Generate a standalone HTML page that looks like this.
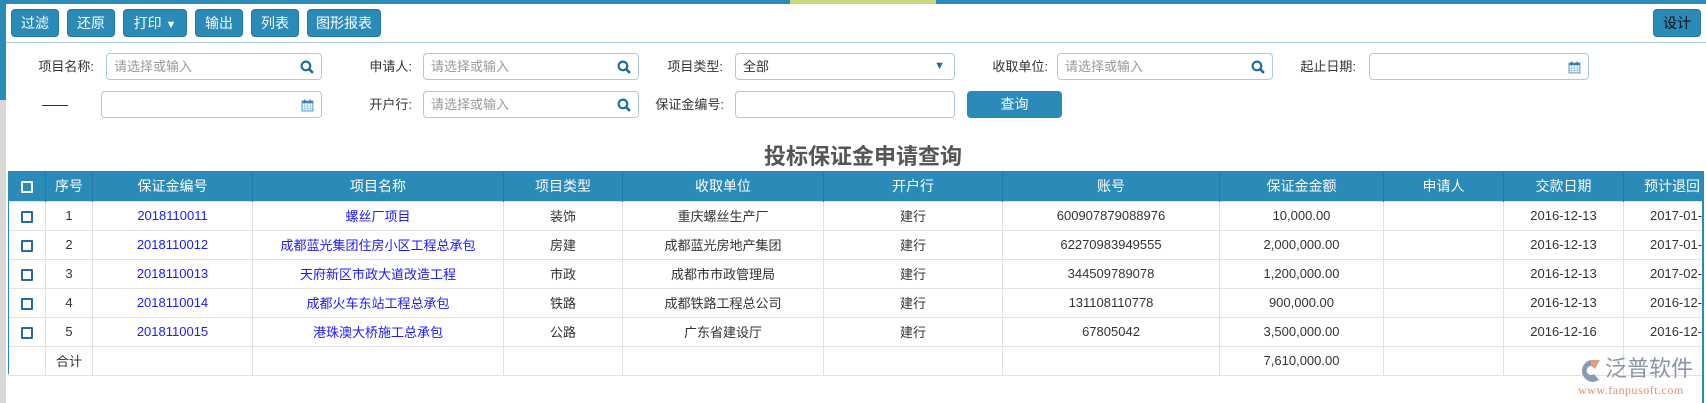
<!DOCTYPE html>
<html><head><meta charset="utf-8"><style>
*{box-sizing:border-box;margin:0;padding:0}
body{width:1706px;height:403px;background:#fff;position:relative;overflow:hidden;font-family:"Liberation Sans","Noto Sans CJK SC",sans-serif;font-size:13px;color:#333}
.a{position:absolute}
.btn{position:absolute;top:9px;height:28px;background:#2a8ab8;border:1px solid #2379a3;border-radius:4px;color:#fff;font-size:14px;line-height:26px;text-align:center}
.lbl{position:absolute;font-size:13px;color:#333;text-align:right;line-height:27px}
.inp{position:absolute;height:27px;border:1px solid #a8cbe3;border-radius:4px;background:#fff;color:#999;font-size:13px;line-height:25px;padding-left:7px}
.srch{position:absolute;right:7px;top:6px;width:14px;height:14px}
table{position:absolute;left:8px;top:171px;width:1695px;border-collapse:collapse;table-layout:fixed}
th{background:#2a8ab8;color:#fff;font-weight:normal;height:30px;font-size:14px;border-right:1px solid #2379a3;white-space:nowrap;overflow:hidden}
td{height:29px;border:1px solid #e2e2e2;text-align:center;font-size:13px;white-space:nowrap;overflow:hidden}
td.l{color:#1a1aff}
.cb{display:inline-block;width:12px;height:12px;border:2px solid #2a6a9a;border-radius:1px;vertical-align:middle}
th .cb{border-color:#fff}
</style></head><body>
<div class="a" style="left:0;top:0;width:1706px;height:4px;background:#2a8ab8"></div>
<div class="a" style="left:790px;top:0;width:146px;height:4px;background:#c8d87a"></div>
<div class="a" style="left:0;top:0;width:6px;height:100px;background:#2a8ab8"></div>
<div class="a" style="left:0;top:100px;width:6px;height:303px;background:#d8d8d8"></div>
<div class="btn" style="left:11px;width:48px">过滤</div>
<div class="btn" style="left:67px;width:48px">还原</div>
<div class="btn" style="left:123px;width:64px">打印 <span style="font-size:11px">▼</span></div>
<div class="btn" style="left:195px;width:48px">输出</div>
<div class="btn" style="left:251px;width:48px">列表</div>
<div class="btn" style="left:307px;width:74px">图形报表</div>
<div class="btn" style="left:1653px;width:48px;color:#111">设计</div>
<div class="a" style="left:6px;top:42px;width:1700px;height:1px;background:#a8cbe3"></div>

<svg width="0" height="0" style="position:absolute"><defs><symbol id="q" viewBox="0 0 13 13"><circle cx="5.5" cy="5.5" r="4" fill="none" stroke="#1a6fa0" stroke-width="2"/><path d="M8.5 8.5L12 12" stroke="#1a6fa0" stroke-width="2.4"/></symbol>
<symbol id="c" viewBox="0 0 12 12"><rect x="1" y="2" width="10" height="9" fill="#fff" stroke="#5a9ccc"/><rect x="1" y="2" width="10" height="2" fill="#3a85c0"/><path d="M1 6.5h10M1 8.7h10M3.5 4v7M6 4v7M8.5 4v7" stroke="#8ab8dc" stroke-width=".6"/><path d="M3.5 0.5v3M8.5 0.5v3" stroke="#2a6a9a"/></symbol></defs></svg>

<div class="lbl" style="left:20px;top:53px;width:74px">项目名称:</div>
<div class="inp" style="left:106px;top:53px;width:216px">请选择或输入<svg class="srch"><use href="#q"/></svg></div>
<div class="lbl" style="left:340px;top:53px;width:72px">申请人:</div>
<div class="inp" style="left:423px;top:53px;width:216px">请选择或输入<svg class="srch"><use href="#q"/></svg></div>
<div class="lbl" style="left:645px;top:53px;width:78px">项目类型:</div>
<div class="inp" style="left:735px;top:53px;width:220px;color:#333">全部<span class="a" style="right:9px;top:0;font-size:11px;color:#1a6fa0">▼</span></div>
<div class="lbl" style="left:970px;top:53px;width:78px">收取单位:</div>
<div class="inp" style="left:1057px;top:53px;width:216px">请选择或输入<svg class="srch"><use href="#q"/></svg></div>
<div class="lbl" style="left:1280px;top:53px;width:76px">起止日期:</div>
<div class="inp" style="left:1369px;top:53px;width:220px"><svg class="srch" style="width:13px;height:13px;top:7px"><use href="#c"/></svg></div>

<div class="a" style="left:42px;top:105px;width:26px;height:1px;background:#333"></div>
<div class="inp" style="left:101px;top:91px;width:221px"><svg class="srch" style="width:13px;height:13px;top:7px"><use href="#c"/></svg></div>
<div class="lbl" style="left:340px;top:91px;width:72px">开户行:</div>
<div class="inp" style="left:423px;top:91px;width:216px">请选择或输入<svg class="srch"><use href="#q"/></svg></div>
<div class="lbl" style="left:640px;top:91px;width:84px">保证金编号:</div>
<div class="inp" style="left:735px;top:91px;width:220px"></div>
<div class="a" style="left:967px;top:91px;width:95px;height:27px;background:#2a8ab8;border-radius:4px;color:#fff;font-size:14px;line-height:27px;text-align:center">查询</div>

<div class="a" style="left:663px;top:139px;width:400px;text-align:center;font-size:22px;font-weight:bold;color:#555">投标保证金申请查询</div>

<table>
<colgroup><col style="width:37px"><col style="width:47px"><col style="width:160px"><col style="width:251px"><col style="width:119px"><col style="width:201px"><col style="width:179px"><col style="width:217px"><col style="width:164px"><col style="width:120px"><col style="width:120px"><col style="width:80px"></colgroup>
<tr><th><span class="cb"></span></th><th>序号</th><th>保证金编号</th><th>项目名称</th><th>项目类型</th><th>收取单位</th><th>开户行</th><th>账号</th><th>保证金金额</th><th>申请人</th><th>交款日期</th><th style="text-align:left;padding-left:20px">预计退回日期</th></tr>
<tr><td><span class="cb"></span></td><td>1</td><td class="l">2018110011</td><td class="l">螺丝厂项目</td><td>装饰</td><td>重庆螺丝生产厂</td><td>建行</td><td>600907879088976</td><td>10,000.00</td><td></td><td>2016-12-13</td><td style="text-align:left;padding-left:26px">2017-01-20</td></tr>
<tr><td><span class="cb"></span></td><td>2</td><td class="l">2018110012</td><td class="l">成都蓝光集团住房小区工程总承包</td><td>房建</td><td>成都蓝光房地产集团</td><td>建行</td><td>62270983949555</td><td>2,000,000.00</td><td></td><td>2016-12-13</td><td style="text-align:left;padding-left:26px">2017-01-20</td></tr>
<tr><td><span class="cb"></span></td><td>3</td><td class="l">2018110013</td><td class="l">天府新区市政大道改造工程</td><td>市政</td><td>成都市市政管理局</td><td>建行</td><td>344509789078</td><td>1,200,000.00</td><td></td><td>2016-12-13</td><td style="text-align:left;padding-left:26px">2017-02-20</td></tr>
<tr><td><span class="cb"></span></td><td>4</td><td class="l">2018110014</td><td class="l">成都火车东站工程总承包</td><td>铁路</td><td>成都铁路工程总公司</td><td>建行</td><td>131108110778</td><td>900,000.00</td><td></td><td>2016-12-13</td><td style="text-align:left;padding-left:26px">2016-12-20</td></tr>
<tr><td><span class="cb"></span></td><td>5</td><td class="l">2018110015</td><td class="l">港珠澳大桥施工总承包</td><td>公路</td><td>广东省建设厅</td><td>建行</td><td>67805042</td><td>3,500,000.00</td><td></td><td>2016-12-16</td><td style="text-align:left;padding-left:26px">2016-12-20</td></tr>
<tr><td></td><td>合计</td><td></td><td></td><td></td><td></td><td></td><td></td><td>7,610,000.00</td><td></td><td></td><td style="border-right:none"></td></tr>
</table>
<div class="a" style="left:8px;top:171px;width:1px;height:203px;background:#2a8ab8"></div>
<div class="a" style="left:1702px;top:171px;width:2px;height:232px;background:#2a8ab8"></div>

<div class="a" style="left:1577px;top:358px;width:26px;height:26px">
<svg width="26" height="26" viewBox="0 0 26 26"><path d="M14 2A11 11 0 1 0 22 22L17 16A4.5 4.5 0 1 1 14 8Z" fill="#8a9ab8"/><path d="M14 2L23 2L18 11L14 8Z" fill="#e0a080"/></svg></div>
<div class="a" style="left:1605px;top:355px;width:100px;font-size:22px;color:#8a95a8;line-height:28px;white-space:nowrap">泛普软件</div>
<div class="a" style="left:1578px;top:383px;font-size:12px;color:#e09070;font-family:'Liberation Serif',serif;letter-spacing:.5px;white-space:nowrap">www.fanpusoft.com</div>
</body></html>
